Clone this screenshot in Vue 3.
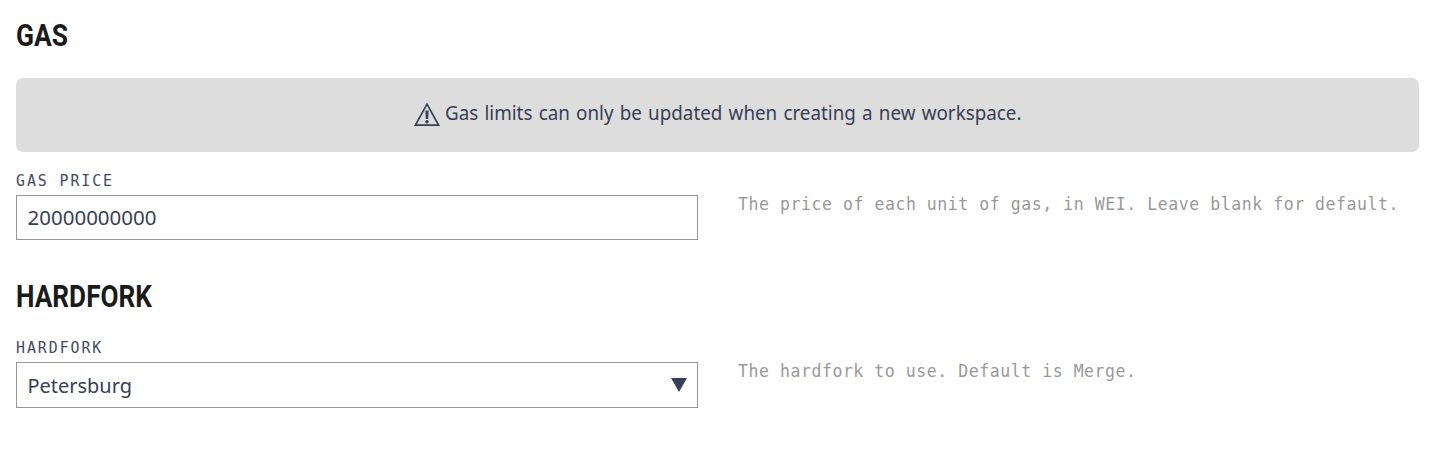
<script setup>
const sections = [
  { title: 'GAS', titleWidth: 52, notice: true, label: 'GAS PRICE', labelWidth: 96, value: '20000000000', valueWidth: 129, hint: 'The price of each unit of gas, in WEI. Leave blank for default.', hintWidth: 660.5 },
  { title: 'HARDFORK', titleWidth: 136, label: 'HARDFORK', labelWidth: 85.3, value: 'Petersburg', valueWidth: 104.5, select: true, hint: 'The hardfork to use. Default is Merge.', hintWidth: 398 },
]
</script>

<template>
  <main class="page">
    <section v-for="s in sections" :key="s.title" class="section" :class="{ fork: s.select }">
      <h2><svg class="heading" width="200" height="40"><text x="0" y="31" :textLength="s.titleWidth" lengthAdjust="spacingAndGlyphs">{{ s.title }}</text></svg></h2>
      <div v-if="s.notice" class="notice">
        <svg class="warn" width="26" height="24" viewBox="0 0 26 24">
          <path d="M13 1.2 24.6 22.1H1.4Z" fill="none" stroke="#353f57" stroke-width="1.7" />
          <path d="M11.4 7.5h3.2l-.4 8.6h-2.4z" fill="#353f57" />
          <circle cx="13" cy="18.7" r="1.8" fill="#353f57" />
        </svg>
        <svg width="577" height="30"><text class="sans" x="0" y="20" textLength="576.5" lengthAdjust="spacingAndGlyphs">Gas limits can only be updated when creating a new workspace.</text></svg>
      </div>
      <div class="row">
        <div class="field">
          <svg class="label" width="200" height="25"><text transform="scale(.93 1)" x="0" y="16" :textLength="s.labelWidth / .93" lengthAdjust="spacing">{{ s.label }}</text></svg>
          <div class="box">
            <svg width="200" height="32"><text class="value" x="0.5" y="22" :textLength="s.valueWidth" lengthAdjust="spacingAndGlyphs">{{ s.value }}</text></svg>
            <svg v-if="s.select" class="arrow" width="16" height="14"><path d="M0 0H16L8 14Z" fill="#353f57" /></svg>
          </div>
        </div>
        <svg class="hint" width="670" height="30"><text transform="scale(.97 1)" x="0" y="20" :textLength="s.hintWidth / .97" lengthAdjust="spacing">{{ s.hint }}</text></svg>
      </div>
    </section>
  </main>
</template>

<style>
body { background: #fff; }
</style>
<style scoped>
.page { box-sizing: border-box; height: 459px; padding: 15px 13px 0 16px; overflow: hidden; }
svg { display: block; overflow: visible; }
h2 { margin: 0; height: 63px; }
.heading { font: 700 30.5px Roboto, sans-serif; fill: #1b1b1b; }
.fork h2 { height: 61px; }
.section { height: 261px; }
.notice { display: flex; justify-content: center; gap: 5px; box-sizing: border-box; height: 74px; padding-top: 22px; border-radius: 7px; background: #ddd; margin-bottom: 18px; }
.warn { margin-top: 3px; }
.sans { font: 20px "Noto Sans", sans-serif; word-spacing: 1.4px; fill: #383e55; }
.row { display: flex; gap: 40px; }
.field { width: 682px; }
.label { font: 16px "DejaVu Sans Mono", monospace; fill: #454b61; }
.box { display: flex; justify-content: space-between; box-sizing: border-box; height: 45px; border: 1px solid #969696; padding: 7px 10px 0; }
.fork .box { height: 46px; padding-top: 8px; }
.value { font: 20.5px "Noto Sans", sans-serif; fill: #383e55; }
.arrow { margin-top: 7px; }
.hint { margin-top: 20px; font: 17px "DejaVu Sans Mono", monospace; fill: #999; }
</style>
